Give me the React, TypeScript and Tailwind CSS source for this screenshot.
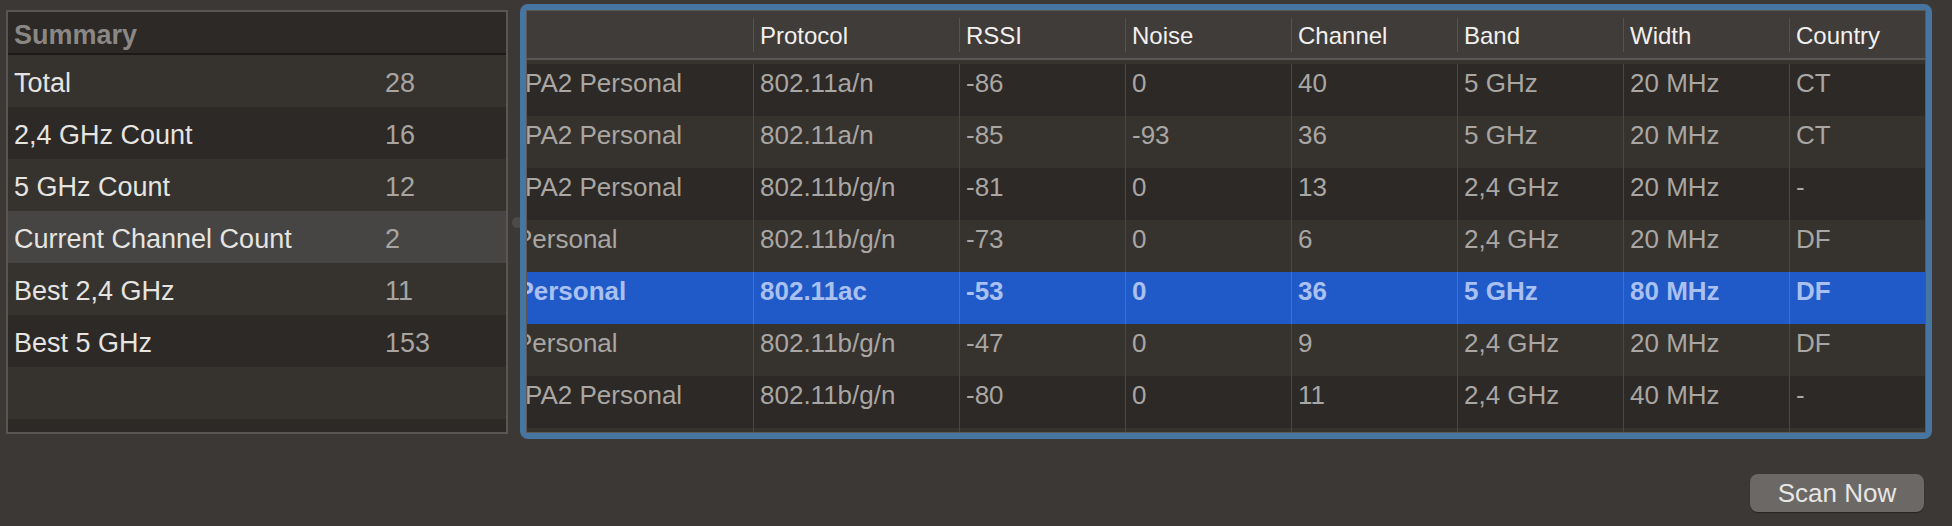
import React from 'react'

type NetRow = {
  security: string
  protocol: string
  rssi: string
  noise: string
  channel: string
  band: string
  width: string
  country: string
  selected?: boolean
}

const summary: [string, string][] = [
  ['Total', '28'],
  ['2,4 GHz Count', '16'],
  ['5 GHz Count', '12'],
  ['Current Channel Count', '2'],
  ['Best 2,4 GHz', '11'],
  ['Best 5 GHz', '153'],
]

const networks: NetRow[] = [
  { security: 'WPA/WPA2 Personal', protocol: '802.11a/n', rssi: '-86', noise: '0', channel: '40', band: '5 GHz', width: '20 MHz', country: 'CT' },
  { security: 'WPA/WPA2 Personal', protocol: '802.11a/n', rssi: '-85', noise: '-93', channel: '36', band: '5 GHz', width: '20 MHz', country: 'CT' },
  { security: 'WPA/WPA2 Personal', protocol: '802.11b/g/n', rssi: '-81', noise: '0', channel: '13', band: '2,4 GHz', width: '20 MHz', country: '-' },
  { security: 'WPA2 Personal', protocol: '802.11b/g/n', rssi: '-73', noise: '0', channel: '6', band: '2,4 GHz', width: '20 MHz', country: 'DF' },
  { security: 'WPA2 Personal', protocol: '802.11ac', rssi: '-53', noise: '0', channel: '36', band: '5 GHz', width: '80 MHz', country: 'DF', selected: true },
  { security: 'WPA2 Personal', protocol: '802.11b/g/n', rssi: '-47', noise: '0', channel: '9', band: '2,4 GHz', width: '20 MHz', country: 'DF' },
  { security: 'WPA/WPA2 Personal', protocol: '802.11b/g/n', rssi: '-80', noise: '0', channel: '11', band: '2,4 GHz', width: '40 MHz', country: '-' },
]

// column widths after the first (security) column, the last one takes what is left
const columns = [
  { key: 'protocol', label: 'Protocol', w: 'w-[206px]' },
  { key: 'rssi', label: 'RSSI', w: 'w-[166px]' },
  { key: 'noise', label: 'Noise', w: 'w-[166px]' },
  { key: 'channel', label: 'Channel', w: 'w-[166px]' },
  { key: 'band', label: 'Band', w: 'w-[166px]' },
  { key: 'width', label: 'Width', w: 'w-[166px]' },
  { key: 'country', label: 'Country', w: 'flex-1' },
] as const

function SummaryPanel() {
  return (
    <div className="mt-[6px] ml-[6px] flex h-[424px] w-[502px] flex-col overflow-hidden border-2 border-[#595654] bg-[#36332f]">
      <div className="h-[41px] shrink-0 bg-[#2c2926] pt-[5px] pl-[6px] text-[27px] font-bold leading-[36px] text-[#8a8785]">
        Summary
      </div>
      <div className="h-[2px] shrink-0 bg-[#1c1a18]" />
      {summary.map(([label, value], i) => {
        const highlighted = label === 'Current Channel Count'
        const bg = highlighted ? 'bg-[#474543]' : i % 2 === 0 ? 'bg-[#36332f]' : 'bg-[#2c2926]'
        return (
          <div key={label} className={`flex h-[52px] shrink-0 pt-[5px] text-[27px] leading-[47px] ${bg}`}>
            <div className="w-[377px] pl-[6px] text-[#e6e4e1]">{label}</div>
            <div className="text-[#a7a4a1]">{value}</div>
          </div>
        )
      })}
      <div className="h-[52px] shrink-0 bg-[#36332f]" />
      <div className="flex-1 bg-[#2c2926]" />
    </div>
  )
}

function NetworkTable() {
  return (
    <div className="relative z-10 h-[435px] w-[1412px] rounded-[8px] border-[6px] border-[#4675a1]">
      <div className="flex h-full flex-col overflow-hidden border border-[#5c5855] bg-[#36332f]">
        {/* header */}
        <div className="flex h-[47px] shrink-0 bg-[#403c39] text-[24px] text-[#f2f0ee]">
          <div className="w-[226px] shrink-0" />
          {columns.map(c => (
            <div key={c.key} className={`flex shrink-0 items-center ${c.w}`}>
              <div className="h-[34px] w-px bg-[#57534f]" />
              <span className="pl-[6px] pt-[2px] leading-[45px]">{c.label}</span>
            </div>
          ))}
        </div>
        <div className="h-[2px] shrink-0 bg-[#5b5754]" />
        <div className="h-[4px] shrink-0" />
        {/* rows */}
        {networks.map((row, i) => {
          const bg = row.selected ? 'bg-[#2059c8]' : i % 2 === 0 ? 'bg-[#2c2926]' : 'bg-[#36332f]'
          const text = row.selected ? 'font-bold text-[#a9c0f0]' : 'text-[#a9a6a3]'
          return (
            <div key={i} className={`flex h-[52px] shrink-0 text-[26px] leading-[30px] ${bg} ${text}`}>
              <div className="w-[226px] shrink-0 overflow-hidden pt-[4px]">
                <span className="-ml-[91px] block whitespace-nowrap">{row.security}</span>
              </div>
              {columns.map(c => (
                <div
                  key={c.key}
                  className={`shrink-0 whitespace-nowrap border-l pt-[4px] pl-[6px] ${c.w} ${
                    row.selected ? 'border-[#4a6fb8]' : 'border-[#4a4643]'
                  }`}
                >
                  {row[c.key]}
                </div>
              ))}
            </div>
          )
        })}
        <div className="flex flex-1">
          <div className="w-[226px] shrink-0" />
          {columns.map(c => (
            <div key={c.key} className={`shrink-0 border-l border-[#4a4643] ${c.w}`} />
          ))}
        </div>
      </div>
    </div>
  )
}

export default function App() {
  return (
    <div className="flex h-[526px] w-full flex-col overflow-hidden bg-[#3b3836] pt-[4px] font-['Liberation_Sans',Arial,sans-serif]">
      <div className="flex items-start">
        <SummaryPanel />
        <div className="relative h-[435px] w-[12px] shrink-0">
          {/* split view handle */}
          <div className="absolute top-[213px] left-[4px] h-[11px] w-[11px] rounded-full bg-[#4d4a47]" />
        </div>
        <NetworkTable />
      </div>
      <div className="mt-[35px] flex justify-end pr-[28px]">
        <button
          type="button"
          className="h-[38px] w-[174px] rounded-[8px] bg-[#6b6866] text-[26px] leading-[38px] text-[#e8e6e4] shadow-[0_1px_1px_rgba(0,0,0,0.35)]"
        >
          Scan Now
        </button>
      </div>
    </div>
  )
}
